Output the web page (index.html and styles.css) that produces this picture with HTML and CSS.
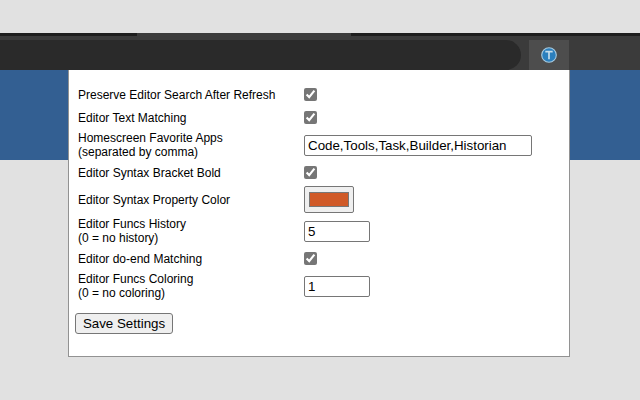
FILE: index.html
```html
<!DOCTYPE html>
<html lang="en">
<head>
<meta charset="utf-8">
<title>Settings</title>
<link rel="stylesheet" href="styles.css">
</head>
<body>
<header class="browser">
  <div class="tabstrip"><div class="tab"></div></div>
  <div class="toolbar">
    <div class="address"></div>
    <div class="extension">
      <svg width="16" height="16" viewBox="0 0 16 16"><circle cx="8" cy="8" r="7.3" fill="#2b7fbd" stroke="#a8cbe0" stroke-width="1.1"/><path d="M4.3 4.6h7.4M8 4.6v7.6" fill="none" stroke="#c4dcea" stroke-width="1.7"/></svg>
    </div>
  </div>
</header>
<main class="page">
  <form class="popup">
    <div class="settings">
      <label for="search">Preserve Editor Search After Refresh</label>
      <input id="search" type="checkbox" checked>
      <label for="text">Editor Text Matching</label>
      <input id="text" type="checkbox" checked>
      <label class="double" for="apps">Homescreen Favorite Apps<br>(separated by comma)</label>
      <input id="apps" class="field wide" type="text" value="Code,Tools,Task,Builder,Historian">
      <label for="bold">Editor Syntax Bracket Bold</label>
      <input id="bold" type="checkbox" checked>
      <label for="color">Editor Syntax Property Color</label>
      <button id="color" class="color" type="button"><span class="swatch"></span></button>
      <label class="double" for="history">Editor Funcs History<br>(0 = no history)</label>
      <input id="history" class="field" type="text" value="5">
      <label for="doend">Editor do-end Matching</label>
      <input id="doend" type="checkbox" checked>
      <label class="double" for="coloring">Editor Funcs Coloring<br>(0 = no coloring)</label>
      <input id="coloring" class="field" type="text" value="1">
    </div>
    <button class="save" type="button">Save Settings</button>
  </form>
</main>
</body>
</html>
```
FILE: styles.css
```css
* { box-sizing: border-box; }
body {
  margin: 0;
  height: 400px;
  overflow: hidden;
  padding-top: 33px;
  background: #e1e1e1;
  color: #000;
  font-family: "Liberation Sans", Arial, sans-serif;
}
.tabstrip { height: 3px; padding-left: 137px; background: #1e1e1e; }
.tab { width: 214px; height: 3px; background: #3b3b3b; }
.toolbar {
  display: flex;
  height: 34px;
  padding-top: 4px;
  background: #3b3b3b;
}
.address {
  width: 521px;
  height: 30px;
  margin-right: 8px;
  border-radius: 0 15px 15px 0;
  background: #2a2a2a;
}
.extension {
  display: flex;
  width: 40px;
  height: 30px;
  align-items: center;
  justify-content: center;
  background: #4d4d4d;
}
.page {
  height: 330px;
  padding-left: 68px;
  background: linear-gradient(#335f92 90px, #e1e1e1 90px);
}
.popup {
  width: 502px;
  height: 287px;
  padding: 13px 0 0 6px;
  border: 1px solid #929292;
  border-top: 0;
  background: #fff;
}
.settings {
  display: grid;
  grid-template-columns: 226px 1fr;
  grid-template-rows: 23px 23px 33px 21px 33px 31px 23px 33px;
  align-items: center;
  justify-items: start;
  padding-left: 3px;
  font-size: 12px;
  line-height: 14px;
}
.double { padding-bottom: 2px; }
input[type="checkbox"] {
  width: 13px;
  height: 13px;
  margin: 0;
  accent-color: #767676;
}
.field {
  width: 66px;
  height: 21px;
  padding: 1px 3px;
  border: 1px solid #767676;
  border-radius: 2px;
  background: #fff;
  color: #000;
  font: 13.333px "Liberation Sans", Arial, sans-serif;
}
.wide { width: 228px; }
.color {
  width: 50px;
  height: 27px;
  padding: 5px 4px;
  border: 1px solid #767676;
  border-radius: 2px;
  background: #efefef;
}
.swatch {
  display: block;
  height: 15px;
  border: 1px solid #777;
  background: #d05a28;
}
.save {
  display: block;
  width: 98px;
  height: 21px;
  margin-top: 10px;
  padding: 0;
  border: 1px solid #767676;
  border-radius: 3px;
  background: #efefef;
  color: #000;
  font: 13.333px "Liberation Sans", Arial, sans-serif;
}
```
